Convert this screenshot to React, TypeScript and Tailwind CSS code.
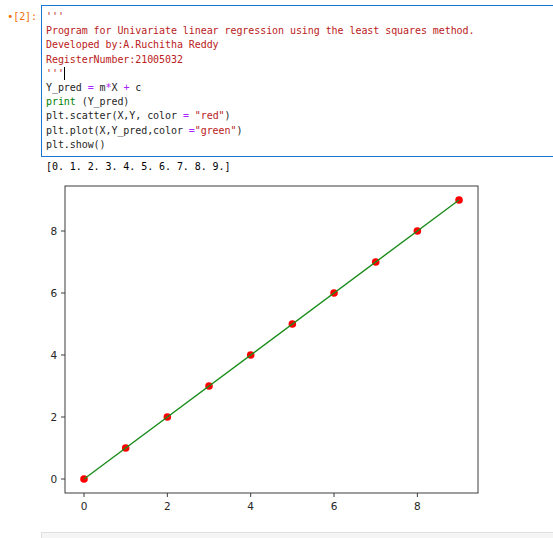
const S = 'text-[#ba2121]';
const O = 'text-[#aa22ff]';
const G = 'text-[#008000]';

const xTicks = [0, 2, 4, 6, 8];
const yTicks = [0, 2, 4, 6, 8];
const pts = [0, 1, 2, 3, 4, 5, 6, 7, 8, 9];

const px = (v: number) => 84 + v * 41.67;
const py = (v: number) => 479 - v * 31;

function Plot() {
  return (
    <svg width="553" height="357" viewBox="0 175 553 357" className="block">
      <rect x="65" y="186" width="413" height="307" fill="none" stroke="#3c3c3c" strokeWidth="1" />
      {yTicks.map((t) => (
        <g key={`y${t}`}>
          <line x1="61" x2="65" y1={py(t)} y2={py(t)} stroke="#3c3c3c" strokeWidth="1" />
          <text
            x="57"
            y={py(t) + 4}
            textAnchor="end"
            fontSize="10.5"
            fill="#262626"
            fontFamily="'DejaVu Sans', sans-serif"
          >
            {t}
          </text>
        </g>
      ))}
      {xTicks.map((t) => (
        <g key={`x${t}`}>
          <line x1={px(t)} x2={px(t)} y1="493" y2="497" stroke="#3c3c3c" strokeWidth="1" />
          <text
            x={px(t)}
            y="510"
            textAnchor="middle"
            fontSize="10.5"
            fill="#262626"
            fontFamily="'DejaVu Sans', sans-serif"
          >
            {t}
          </text>
        </g>
      ))}
      {pts.map((v) => (
        <circle key={v} cx={px(v)} cy={py(v)} r="3.8" fill="#ff0000" />
      ))}
      <line x1={px(0)} y1={py(0)} x2={px(9)} y2={py(9)} stroke="#1a8c1a" strokeWidth="1.4" />
    </svg>
  );
}

export default function App() {
  return (
    <div
      className="w-[553px] h-[538px] overflow-hidden bg-white pt-[5px] text-[10px] tracking-[-0.07px] leading-[14.2px] text-[#1f1f1f]"
      style={{ fontFamily: "'DejaVu Sans Mono', monospace" }}
    >
      <div className="flex">
        <div className="w-[41px] shrink-0 pt-[5px] pr-[4px] text-right text-[#ef6c00]">•[2]:</div>
        <div className="w-[520px] shrink-0 border border-[#1976d2] bg-white px-[4px] py-[4px] whitespace-pre">
          <div className={S}>'''</div>
          <div className={S}>Program for Univariate linear regression using the least squares method.</div>
          <div className={S}>Developed by:A.Ruchitha Reddy</div>
          <div className={S}>RegisterNumber:21005032</div>
          <div className={S}>
            '''<span className="inline-block w-px h-[13px] bg-black align-middle" />
          </div>
          <div>
            Y_pred <span className={O}>=</span> m<span className={O}>*</span>X <span className={O}>+</span> c
          </div>
          <div>
            <span className={G}>print</span> (Y_pred)
          </div>
          <div>
            plt.scatter(X,Y, color <span className={O}>=</span> <span className={S}>"red"</span>)
          </div>
          <div>
            plt.plot(X,Y_pred,color <span className={O}>=</span>
            <span className={S}>"green"</span>)
          </div>
          <div>plt.show()</div>
        </div>
      </div>
      <div className="h-[18px] pt-[3px] pl-[46px] whitespace-pre text-black">[0. 1. 2. 3. 4. 5. 6. 7. 8. 9.]</div>
      <Plot />
      <div className="ml-[41px] w-[530px] h-[20px] border border-[#e0e0e0] bg-[#f5f5f5]" />
    </div>
  );
}
